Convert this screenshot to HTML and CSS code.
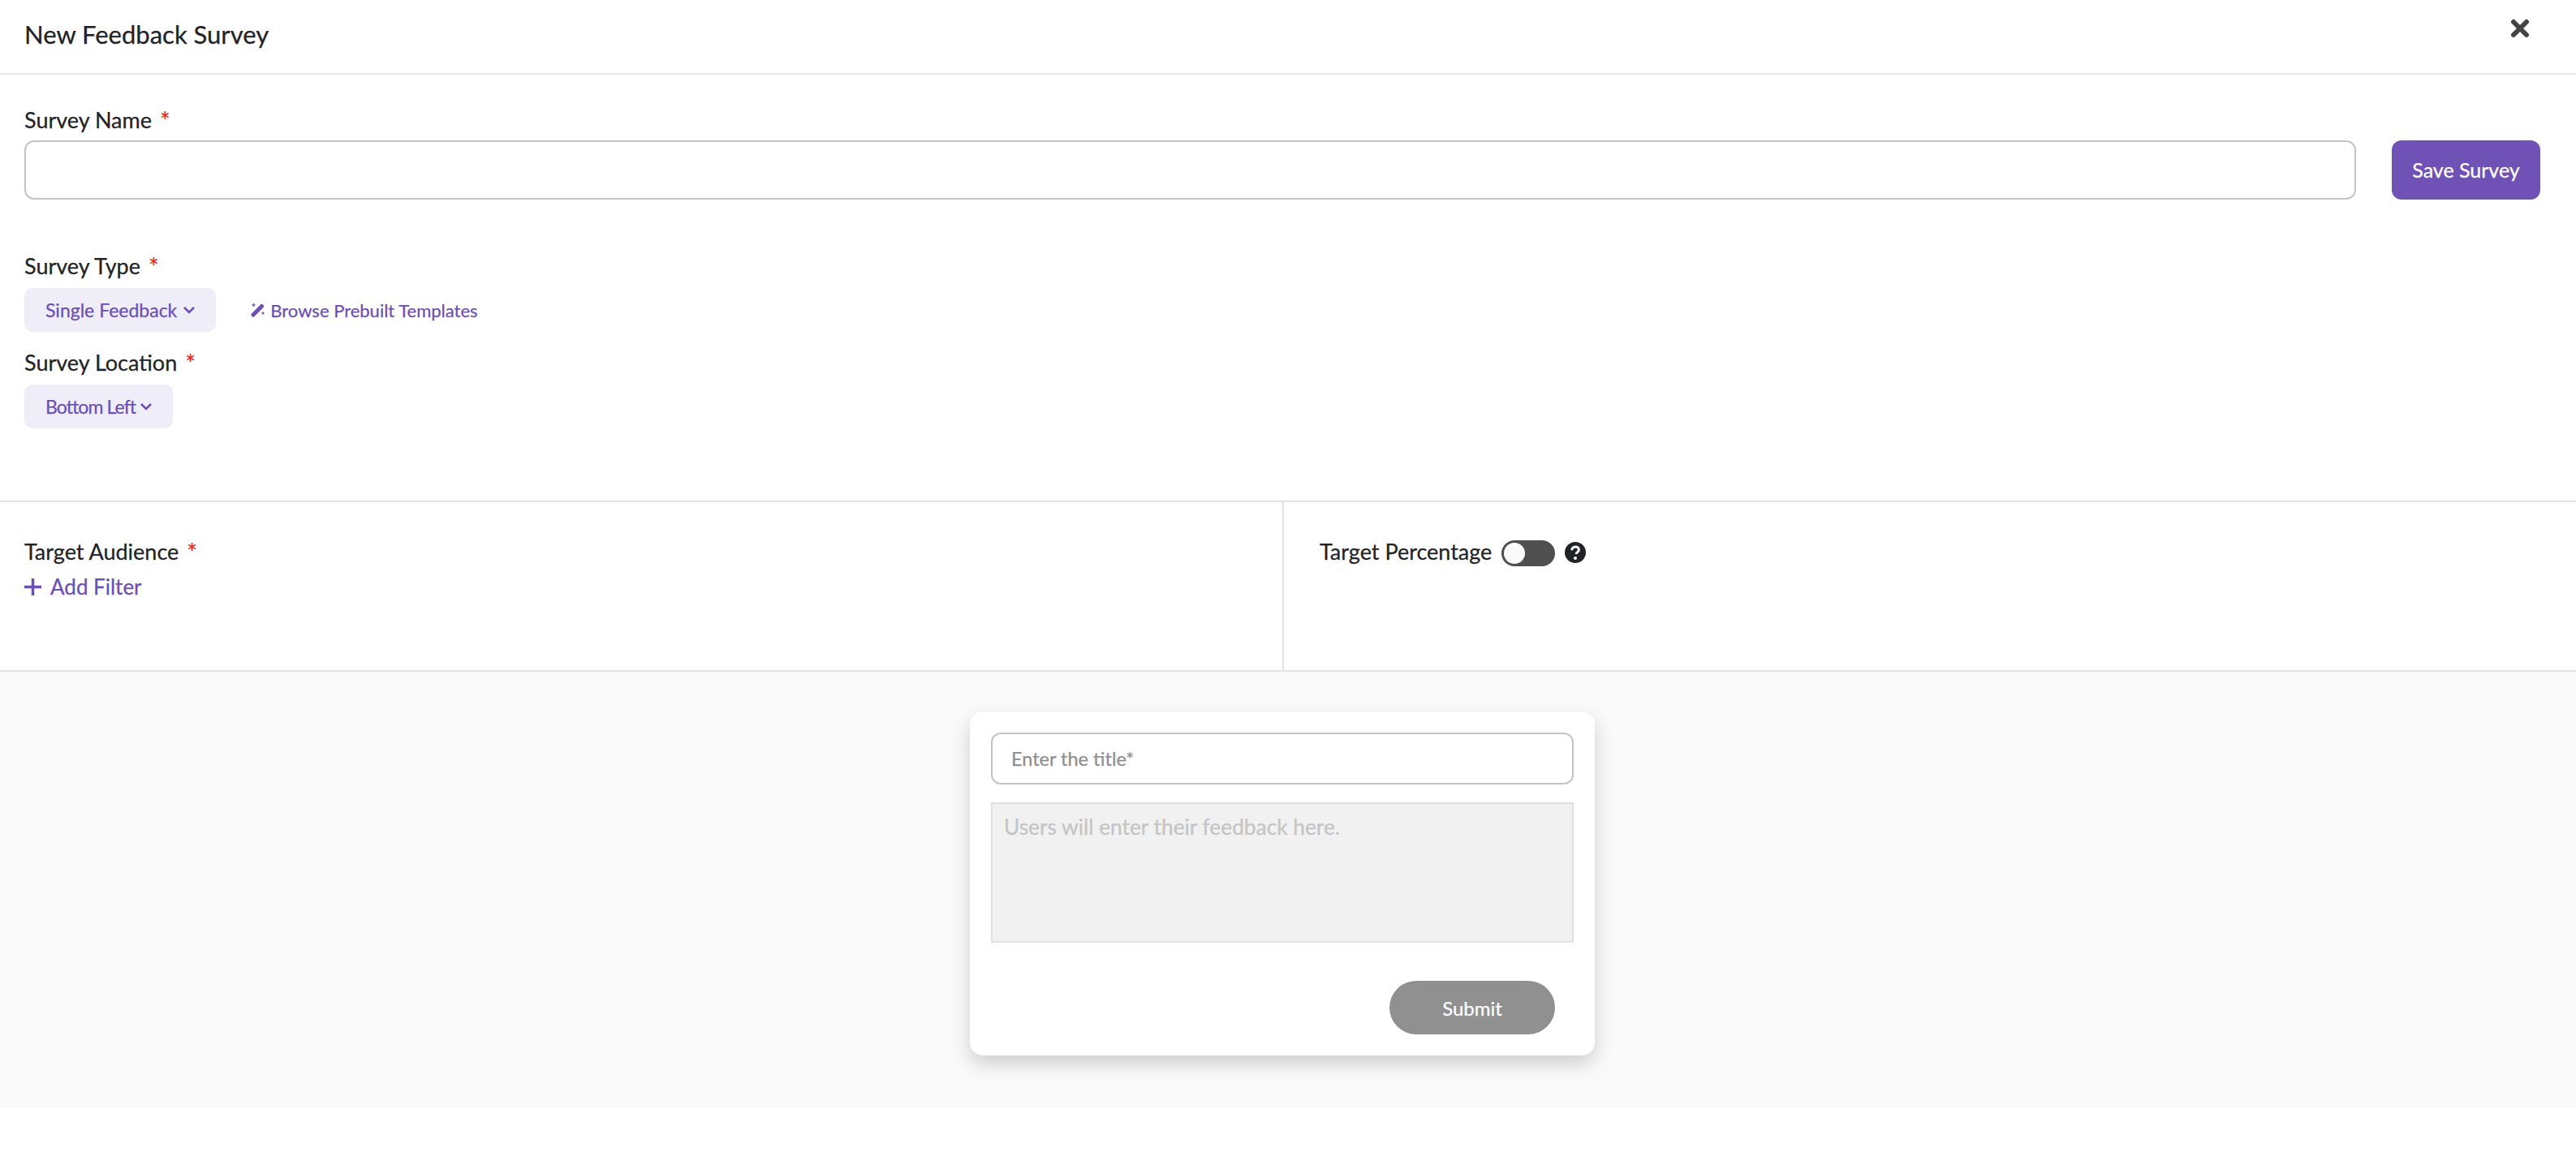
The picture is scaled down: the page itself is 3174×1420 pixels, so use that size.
FILE: index.html

```html
<!DOCTYPE html>
<html>
<head>
<meta charset="utf-8">
<title>New Feedback Survey</title>
<link rel="stylesheet" href="styles.css">
</head>
<body>
<div class="header">
    <span class="header-title">New Feedback Survey</span>
    <svg class="close-icon" viewBox="0 0 24 24"><path d="M4 4L20 20M20 4L4 20"/></svg>
</div>

<div class="settings">
    <div class="field-label">Survey Name <span class="req">*</span></div>
    <div class="name-row">
        <input class="name-input" type="text">
        <button class="save-btn">Save Survey</button>
    </div>

    <div class="field-label type-label">Survey Type <span class="req">*</span></div>
    <div class="type-row">
        <button class="chip">Single Feedback
            <svg class="chevron" viewBox="0 0 14 10"><path d="M1 2L7 8L13 2"/></svg>
        </button>
        <a class="templates-link">
            <svg class="wand-icon" viewBox="0 0 18 18">
                <path class="wand-stick" d="M3 15L13.500 4.500"/>
                <path d="M3.500 0l.8 2.200 2.200.8-2.200.8-.8 2.200-.8-2.200L.5 3l2.200-.8zM15 10.500l.7 1.800 1.800.7-1.800.7-.7 1.800-.7-1.800-1.800-.7 1.800-.7z"/>
            </svg>
            Browse Prebuilt Templates
        </a>
    </div>

    <div class="field-label location-label">Survey Location <span class="req">*</span></div>
    <button class="chip chip-tight">Bottom Left
        <svg class="chevron" viewBox="0 0 14 10"><path d="M1 2L7 8L13 2"/></svg>
    </button>
</div>

<div class="targets">
    <div class="target-pane">
        <div class="field-label">Target Audience <span class="req">*</span></div>
        <a class="add-filter">
            <svg class="plus-icon" viewBox="0 0 21 21"><path d="M10.500 0V21M0 10.500H21"/></svg>
            Add Filter
        </a>
    </div>
    <div class="target-pane percent-pane">
        <span class="field-label">Target Percentage</span>
        <span class="toggle"><span class="toggle-knob"></span></span>
        <svg class="help-icon" viewBox="0 0 26 26">
            <circle cx="13" cy="13" r="13" fill="#222326"/>
            <path d="M8.800 10.200c0-2.600 1.900-4.200 4.400-4.200 2.400 0 4.200 1.400 4.200 3.600 0 1.800-1 2.600-2.100 3.300-.9.600-1.300 1-1.300 2" fill="none" stroke="#fff" stroke-width="3"/>
            <circle cx="13" cy="20" r="2" fill="#fff"/>
        </svg>
    </div>
</div>

<div class="preview">
    <div class="survey-card">
        <input class="title-input" type="text" placeholder="Enter the title*">
        <textarea class="feedback-box" placeholder="Users will enter their feedback here." disabled></textarea>
        <div class="card-actions">
            <button class="submit-btn">Submit</button>
        </div>
    </div>
</div>
</body>
</html>
```

FILE: styles.css

```css
* {
    box-sizing: border-box;
}

body {
    margin: 0;
    background: white;
    color: #222326;
    font-family: Lato, "Liberation Sans", sans-serif;
    -webkit-text-stroke: 0.25px;
}

.header {
    height: 92px;
    padding: 23px 57px 0 30px;
    display: flex;
    justify-content: space-between;
    align-items: flex-start;
    border-bottom: 2px solid #e6e6e6;
}

.header-title {
    font-size: 31px;
    line-height: 38px;
}

.close-icon {
    width: 24px;
    height: 24px;
}

.close-icon path {
    fill: none;
    stroke: #444;
    stroke-width: 6;
    stroke-linecap: round;
}

.settings {
    height: 527px;
    padding: 39px 44px 0 30px;
    border-bottom: 2px solid #dfe3e8;
}

.field-label {
    font-size: 27px;
    line-height: 34px;
}

.req {
    color: #e8291c;
    margin-left: 3px;
    vertical-align: -2px;
    font-size: 30px;
    line-height: 0;
}

.name-row {
    display: flex;
    gap: 44px;
    margin-top: 8px;
}

.name-input {
    flex: 1;
    height: 73px;
    border: 2px solid #c4c4c4;
    border-radius: 12px;
    background: white;
}

.save-btn {
    width: 183px;
    height: 73px;
    padding-bottom: 3px;
    border: none;
    border-radius: 12px;
    background: #7051b5;
    color: white;
    font-family: inherit;
    font-size: 25px;
}

.type-label {
    margin-top: 65px;
}

.type-row {
    display: flex;
    align-items: center;
    gap: 43px;
}

.chip {
    display: flex;
    align-items: center;
    gap: 8px;
    height: 54px;
    margin-top: 10px;
    padding: 0 26px;
    border: none;
    border-radius: 10px;
    background: #efedf7;
    color: #6c4fb5;
    font-family: inherit;
    font-size: 23px;
}

.chip-tight {
    gap: 6px;
    letter-spacing: -0.9px;
}

.chevron {
    width: 14px;
    height: 10px;
}

.chevron path {
    fill: none;
    stroke: #6c4fb5;
    stroke-width: 2.5;
}

.templates-link {
    display: flex;
    align-items: center;
    gap: 6px;
    margin-top: 10px;
    color: #6c4fb5;
    font-size: 22px;
}

.wand-icon {
    width: 18px;
    height: 18px;
    fill: #6c4fb5;
}

.wand-stick {
    fill: none;
    stroke: #6c4fb5;
    stroke-width: 5;
    stroke-linecap: round;
}

.location-label {
    margin-top: 21px;
}

.targets {
    display: flex;
    height: 209px;
    border-bottom: 2px solid #dfe3e8;
}

.target-pane {
    width: 1582px;
    padding: 44px 30px 0;
    border-right: 2px solid #dfe3e8;
}

.percent-pane {
    flex: 1;
    display: flex;
    align-items: flex-start;
    gap: 12px;
    padding-left: 44px;
    border-right: none;
}

.add-filter {
    display: flex;
    align-items: center;
    gap: 11px;
    margin-top: 10px;
    color: #6c4fb5;
    font-size: 26px;
}

.plus-icon {
    width: 21px;
    height: 21px;
}

.plus-icon path {
    fill: none;
    stroke: #6c4fb5;
    stroke-width: 3.5;
}

.toggle {
    width: 66px;
    height: 32px;
    margin-top: 3px;
    padding: 3px;
    border-radius: 16px;
    background: #4f4f4f;
}

.toggle-knob {
    display: block;
    width: 26px;
    height: 26px;
    border-radius: 50%;
    background: #fafafa;
}

.help-icon {
    width: 26px;
    height: 26px;
    margin-top: 5px;
}

.preview {
    height: 537px;
    padding-top: 49px;
    background: #fafafa;
}

.survey-card {
    width: 770px;
    height: 424px;
    margin-left: 1195px;
    padding: 26px 26px 0;
    border-radius: 16px;
    background: white;
    box-shadow: 0 10px 24px rgba(0, 0, 0, 0.18);
}

.title-input {
    display: block;
    width: 100%;
    height: 64px;
    padding: 0 23px;
    border: 2px solid #c4c4c4;
    border-radius: 12px;
    font-family: inherit;
    font-size: 23.5px;
}

.title-input::placeholder {
    color: #8e8e8e;
}

.feedback-box {
    display: block;
    width: 100%;
    height: 173px;
    margin-top: 22px;
    padding: 12px 14px;
    border: 2px solid #e0e0e0;
    background: #f1f1f1;
    font-family: inherit;
    font-size: 26.3px;
    resize: none;
}

.feedback-box::placeholder {
    color: #c4c4c4;
}

.card-actions {
    display: flex;
    justify-content: flex-end;
    margin-top: 47px;
    padding-right: 23px;
}

.submit-btn {
    width: 204px;
    height: 66px;
    border: none;
    border-radius: 33px;
    background: #909090;
    color: white;
    font-family: inherit;
    font-size: 24px;
}
```
